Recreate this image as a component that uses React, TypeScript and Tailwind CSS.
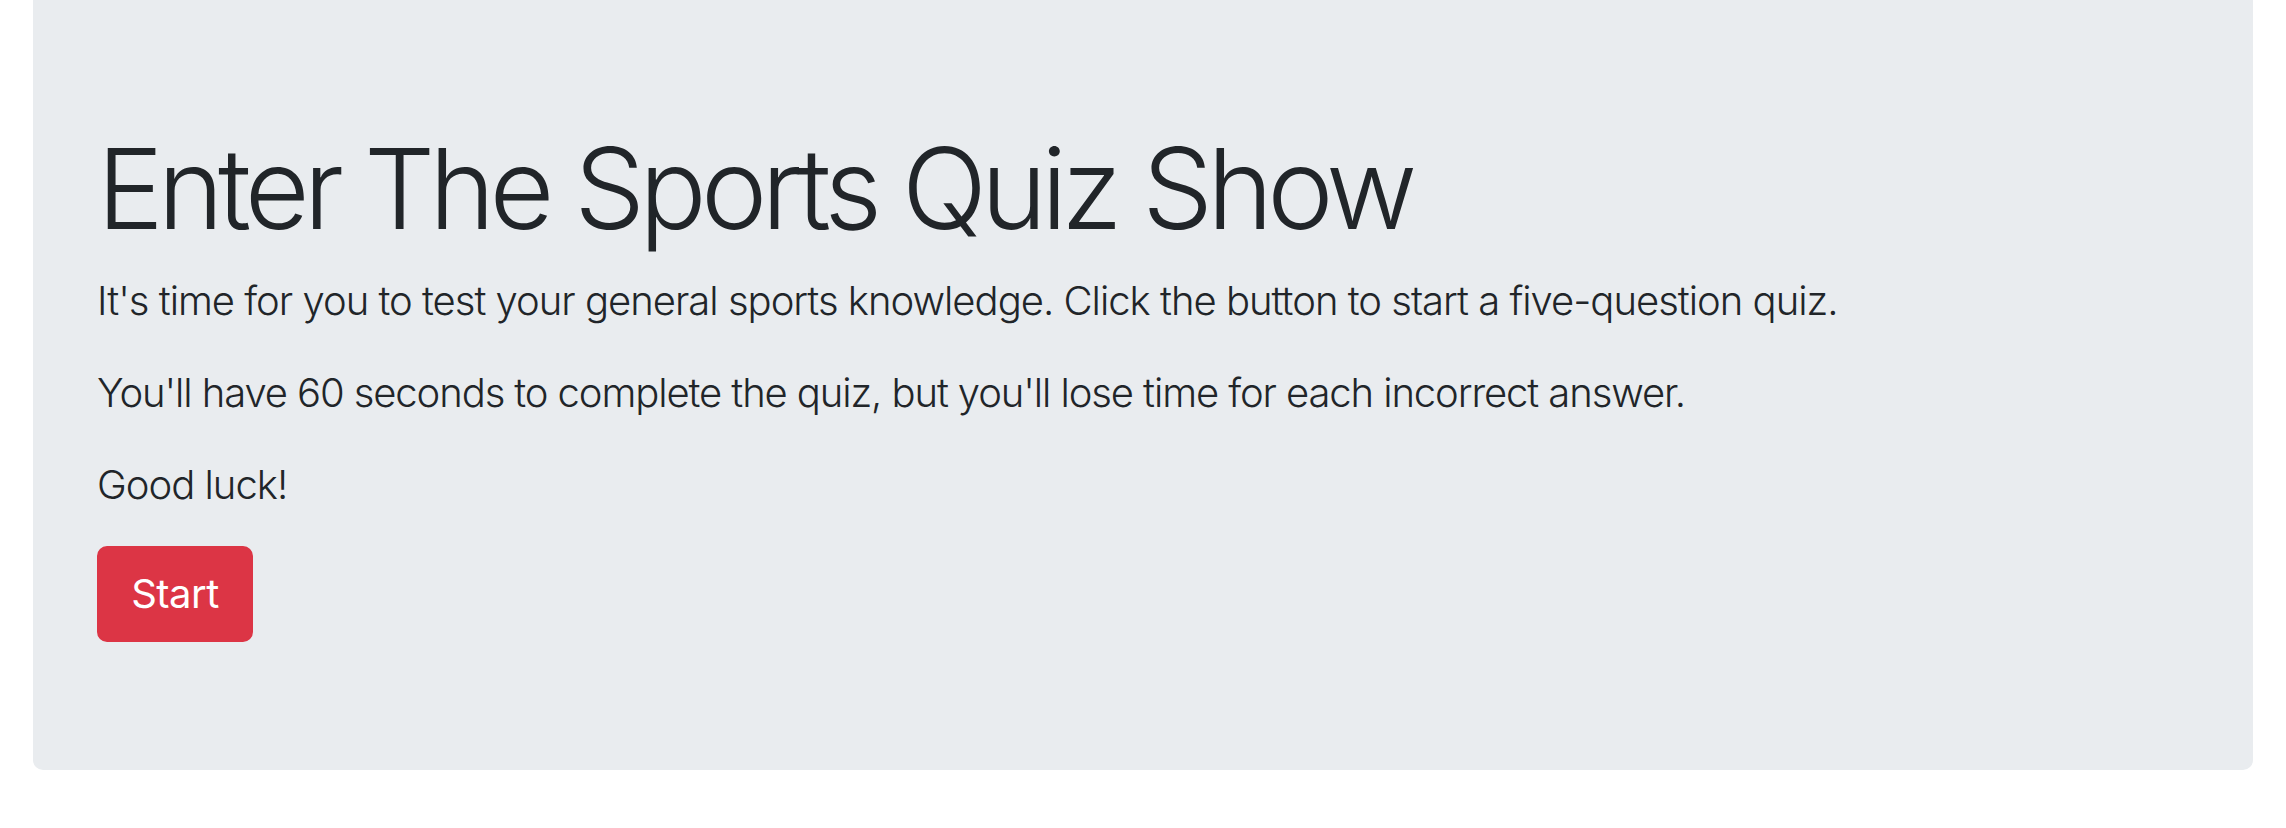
export default function App() {
  const font = { fontFamily: "Inter, 'Noto Sans', sans-serif" };

  return (
    <div className="min-h-[828px] bg-white px-[33px]" style={font}>
      {/* Jumbotron */}
      <div className="rounded-b-[10px] bg-[#e9ecef] px-[64px] pt-[121px] pb-[128px] text-[#212529]">
        <h1 className="mb-[16px] text-[112px] font-light leading-[134px] tracking-[-5.8px]">
          Enter The Sports Quiz Show
        </h1>
        <p className="mb-[32px] text-[40px] font-light leading-[60px] tracking-[-1px]">
          It's time for you to test your general sports knowledge. Click the button to start a five-question quiz.
        </p>
        <p className="mb-[32px] text-[40px] font-light leading-[60px] tracking-[-1.1px]">
          You'll have 60 seconds to complete the quiz, but you'll lose time for each incorrect answer.
        </p>
        <p className="mb-[31px] text-[40px] font-light leading-[60px] tracking-[-1px]">Good luck!</p>
        <button className="h-[96px] w-[156px] rounded-[10px] border-2 border-[#dc3545] bg-[#dc3545] text-[40px] leading-[60px] tracking-[-0.5px] text-white">
          Start
        </button>
      </div>
    </div>
  );
}
